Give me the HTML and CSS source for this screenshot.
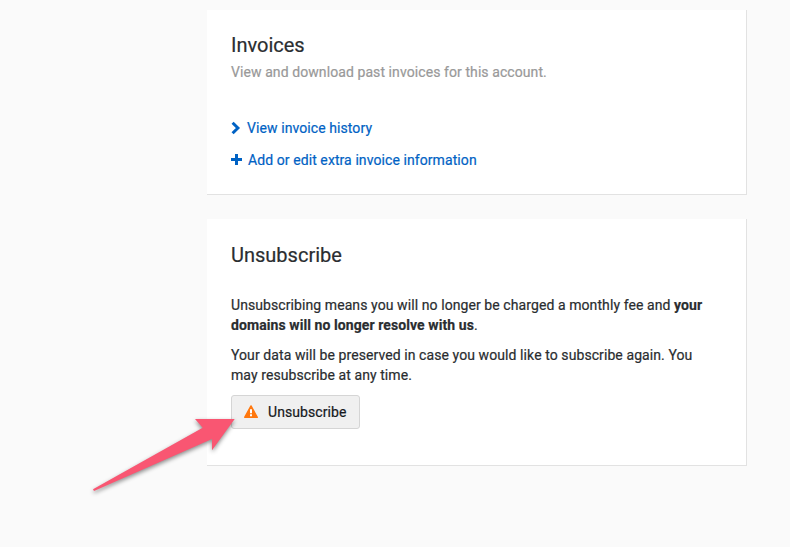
FILE: index.html
```html
<!DOCTYPE html>
<html lang="en">
<head>
<meta charset="utf-8">
<title>Account</title>
<link rel="stylesheet" href="styles.css">
</head>
<body>
<main class="content">
  <section class="card invoices">
    <h2>Invoices</h2>
    <p class="subtitle">View and download past invoices for this account.</p>
    <ul class="links">
      <li><a href="#"><svg class="chevron" width="10" height="14" viewBox="0 0 10 14"><path d="M1.6 1.7 6.9 7l-5.3 5.3" fill="none" stroke="currentColor" stroke-width="3"/></svg>View invoice history</a></li>
      <li><a href="#"><svg class="plus" width="11" height="12" viewBox="0 0 11 12"><path d="M5.5 0v11M0 5.5h11" stroke="currentColor" stroke-width="3"/></svg>Add or edit extra invoice information</a></li>
    </ul>
  </section>
  <section class="card unsubscribe">
    <h2>Unsubscribe</h2>
    <p>Unsubscribing means you will no longer be charged a monthly fee and <strong>your<br>domains will no longer resolve with us</strong>.</p>
    <p>Your data will be preserved in case you would like to subscribe again. You<br>may resubscribe at any time.</p>
    <button class="button" type="button"><svg width="14" height="14" viewBox="0 0 14 14"><path d="M7 .9 13.3 12.3H.7Z" fill="#ff780f" stroke="#ff780f" stroke-width="1.4" stroke-linejoin="round"/><path d="M7 4.2v4M7 9.3v2" stroke="#fff" stroke-width="2"/></svg>Unsubscribe</button>
  </section>
</main>
<svg class="arrow" width="160" height="95" viewBox="0 0 160 95"><path d="M8 79.3 117.7 17.7 110 9h39.7L127 40.3V29L9 81Z" fill="#f95672"/></svg>
</body>
</html>
```
FILE: styles.css
```css
* { box-sizing: border-box; }
body {
  margin: 0;
  height: 547px;
  overflow: hidden;
  background: #fafafa;
  color: #2a2d30;
  font: 14px/20px Roboto, sans-serif;
  letter-spacing: .083px;
  -webkit-text-stroke: .2px currentColor;
}
.content {
  display: flex;
  flex-direction: column;
  gap: 24px;
  width: 540px;
  margin: 10px 0 0 207px;
}
.card {
  padding: 24px;
  background: #fff;
  border-right: 1px solid #e2e2e2;
  border-bottom: 1px solid #e2e2e2;
}
.invoices { height: 185px; padding-top: 23px; }
.unsubscribe { height: 247px; }
h2 { margin: 0; font-size: 20px; line-height: 24px; font-weight: 400; letter-spacing: 0; }
p { margin: 0 0 10px; white-space: nowrap; }
.subtitle { margin: 5px 0 0; color: #999; }
.links { margin: 36px 0 0; padding: 0; list-style: none; }
.links li { height: 32px; }
a { display: flex; align-items: center; color: #0062c4; text-decoration: none; }
.chevron { margin-right: 6px; }
.plus { margin-right: 6px; }
.unsubscribe h2 { margin-bottom: 28px; }
.button {
  display: flex;
  align-items: center;
  gap: 10px;
  width: 129px;
  height: 34px;
  padding: 0 12px;
  background: #f0f0f0;
  border: 1px solid #d5d5d5;
  border-radius: 3px;
  color: #16191c;
  font: inherit;
  letter-spacing: inherit;
}
.arrow {
  position: absolute;
  left: 85px;
  top: 410px;
  filter: drop-shadow(0 2px 2px rgba(0, 0, 0, .45));
}
```
